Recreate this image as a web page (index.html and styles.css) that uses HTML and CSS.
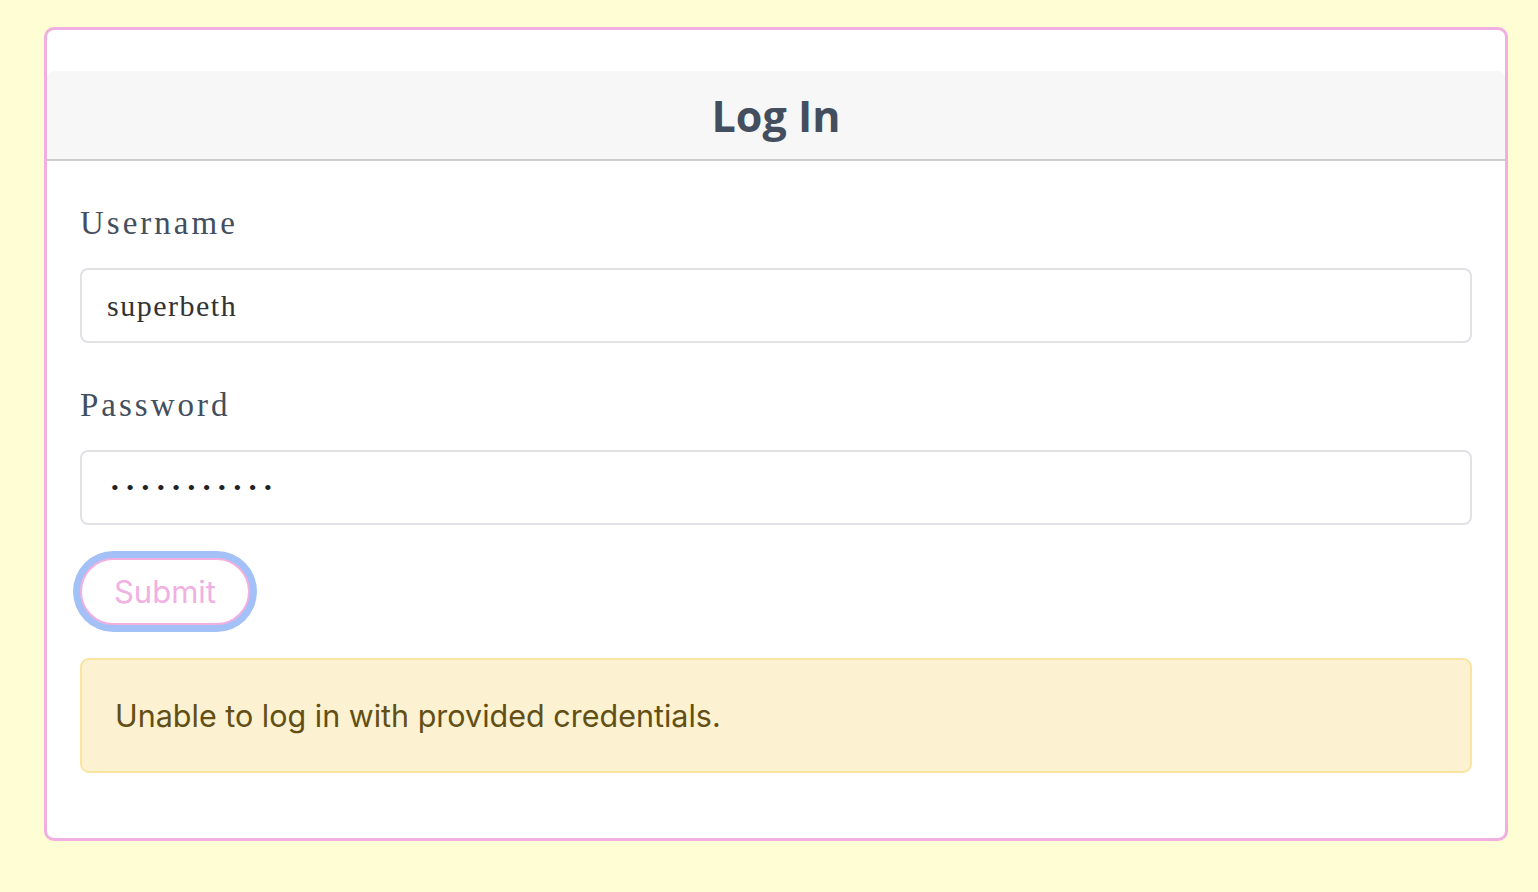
FILE: index.html
```html
<!DOCTYPE html>
<html lang="en">
<head>
<meta charset="utf-8">
<title>Log In</title>
<link rel="stylesheet" href="styles.css">
</head>
<body>
  <main class="card">
    <header class="card-header">
      <h1 class="card-title">Log In</h1>
    </header>
    <form class="card-body">
      <label class="field-label" for="username">Username</label>
      <input class="field-input" id="username" type="text" value="superbeth">
      <label class="field-label" for="password">Password</label>
      <input class="field-input field-password" id="password" type="password" value="passwordxyz">
      <div class="actions">
        <button class="submit-btn" type="button">Submit</button>
      </div>
      <div class="alert">Unable to log in with provided credentials.</div>
    </form>
  </main>
</body>
</html>
```

FILE: styles.css
```css
html, body {
  margin: 0;
  padding: 0;
}

body {
  background: #fffdd3;
  padding: 27px 30px 0 44px;
  min-height: 892px;
  box-sizing: border-box;
}

.card {
  width: 1464px;
  box-sizing: border-box;
  background: #ffffff;
  border: 3px solid #f0afe0;
  border-radius: 10px;
  padding-top: 41px;
  display: flex;
  flex-direction: column;
}

.card-header {
  height: 90px;
  box-sizing: border-box;
  background: #f7f7f7;
  border-bottom: 2px solid #cdcdcd;
  border-radius: 7px 7px 0 0;
  display: flex;
  align-items: center;
  justify-content: center;
}

.card-title {
  margin: 0;
  font-family: "Open Sans", sans-serif;
  font-weight: 700;
  font-size: 43px;
  color: #434e5e;
  line-height: 1;
}

.card-body {
  display: flex;
  flex-direction: column;
  padding: 44px 33px 65px;
}

.field-label {
  font-family: "Liberation Serif", serif;
  font-size: 33px;
  line-height: 36px;
  letter-spacing: 3px;
  color: #434e5e;
  margin-bottom: 27px;
}

.field-input {
  height: 75px;
  box-sizing: border-box;
  border: 2px solid #e0e2e5;
  border-radius: 8px;
  padding: 0 25px;
  font-family: "Liberation Serif", serif;
  font-size: 30px;
  letter-spacing: 1.5px;
  color: #333333;
  background: #ffffff;
  margin-bottom: 44px;
  outline: none;
}

.field-password {
  font-size: 22px;
  letter-spacing: 7.6px;
  padding-left: 29px;
  color: #222222;
  margin-bottom: 33px;
}

.actions {
  display: flex;
  margin-bottom: 33px;
}

.submit-btn {
  height: 67px;
  width: 170px;
  box-sizing: border-box;
  border: 2px solid #f1b0e1;
  border-radius: 34px;
  background: #ffffff;
  color: #f1b0e1;
  font-family: "Inter", "Roboto", sans-serif;
  font-size: 31px;
  padding: 0;
  box-shadow: 0 0 0 7px #a3c0f7;
}

.alert {
  height: 115px;
  box-sizing: border-box;
  display: flex;
  align-items: center;
  padding: 0 33px;
  background: #fcf2d1;
  border: 2px solid #f9e4a0;
  border-radius: 9px;
  font-family: "Inter", "Roboto", sans-serif;
  font-size: 30.5px;
  color: #634f15;
}
```
